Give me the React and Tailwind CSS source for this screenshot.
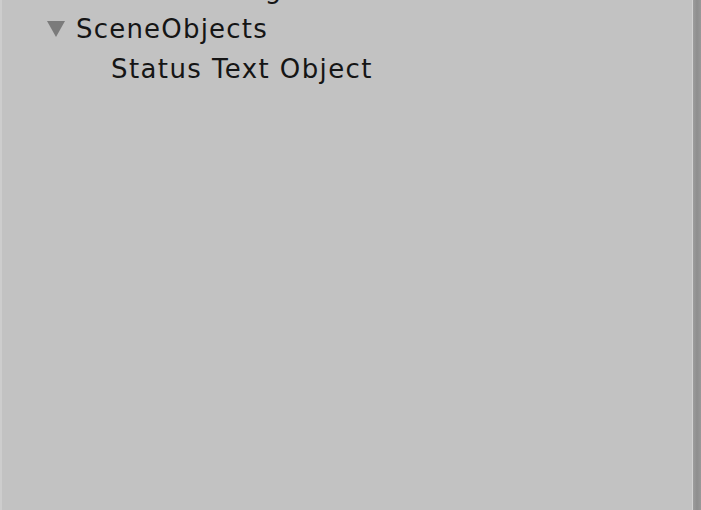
export default function App() {
  const font = { fontFamily: '"DejaVu Sans", Verdana, sans-serif' };
  return (
    <div className="w-[701px] h-[510px] flex overflow-hidden bg-[#c2c2c2]">
      <div className="w-[2px] h-full bg-[#cdcdcd]" />
      <div className="flex-1 relative overflow-hidden">
        <div className="flex flex-col mt-[-31px] text-[26px] leading-[40px] text-[#151515]" style={font}>
          <div className="h-[40px] pl-[74px] whitespace-nowrap tracking-[1.3px]">Directional Light</div>
          <div className="h-[40px] flex items-center">
            <svg width="20" height="18" viewBox="0 0 20 18" className="ml-[44px] mr-[10px]">
              <polygon points="1,1 19,1 10,17" fill="#7b7b7b" />
            </svg>
            <span className="whitespace-nowrap tracking-[1.2px]">SceneObjects</span>
          </div>
          <div className="h-[40px] pl-[109px] whitespace-nowrap tracking-[1.4px]">Status Text Object</div>
        </div>
      </div>
      <div className="w-[1px] h-full bg-[#d2d2d2]" />
      <div className="w-[8px] h-full bg-gradient-to-r from-[#9c9c9c] via-[#8e8e8e] to-[#999999]" />
    </div>
  );
}
